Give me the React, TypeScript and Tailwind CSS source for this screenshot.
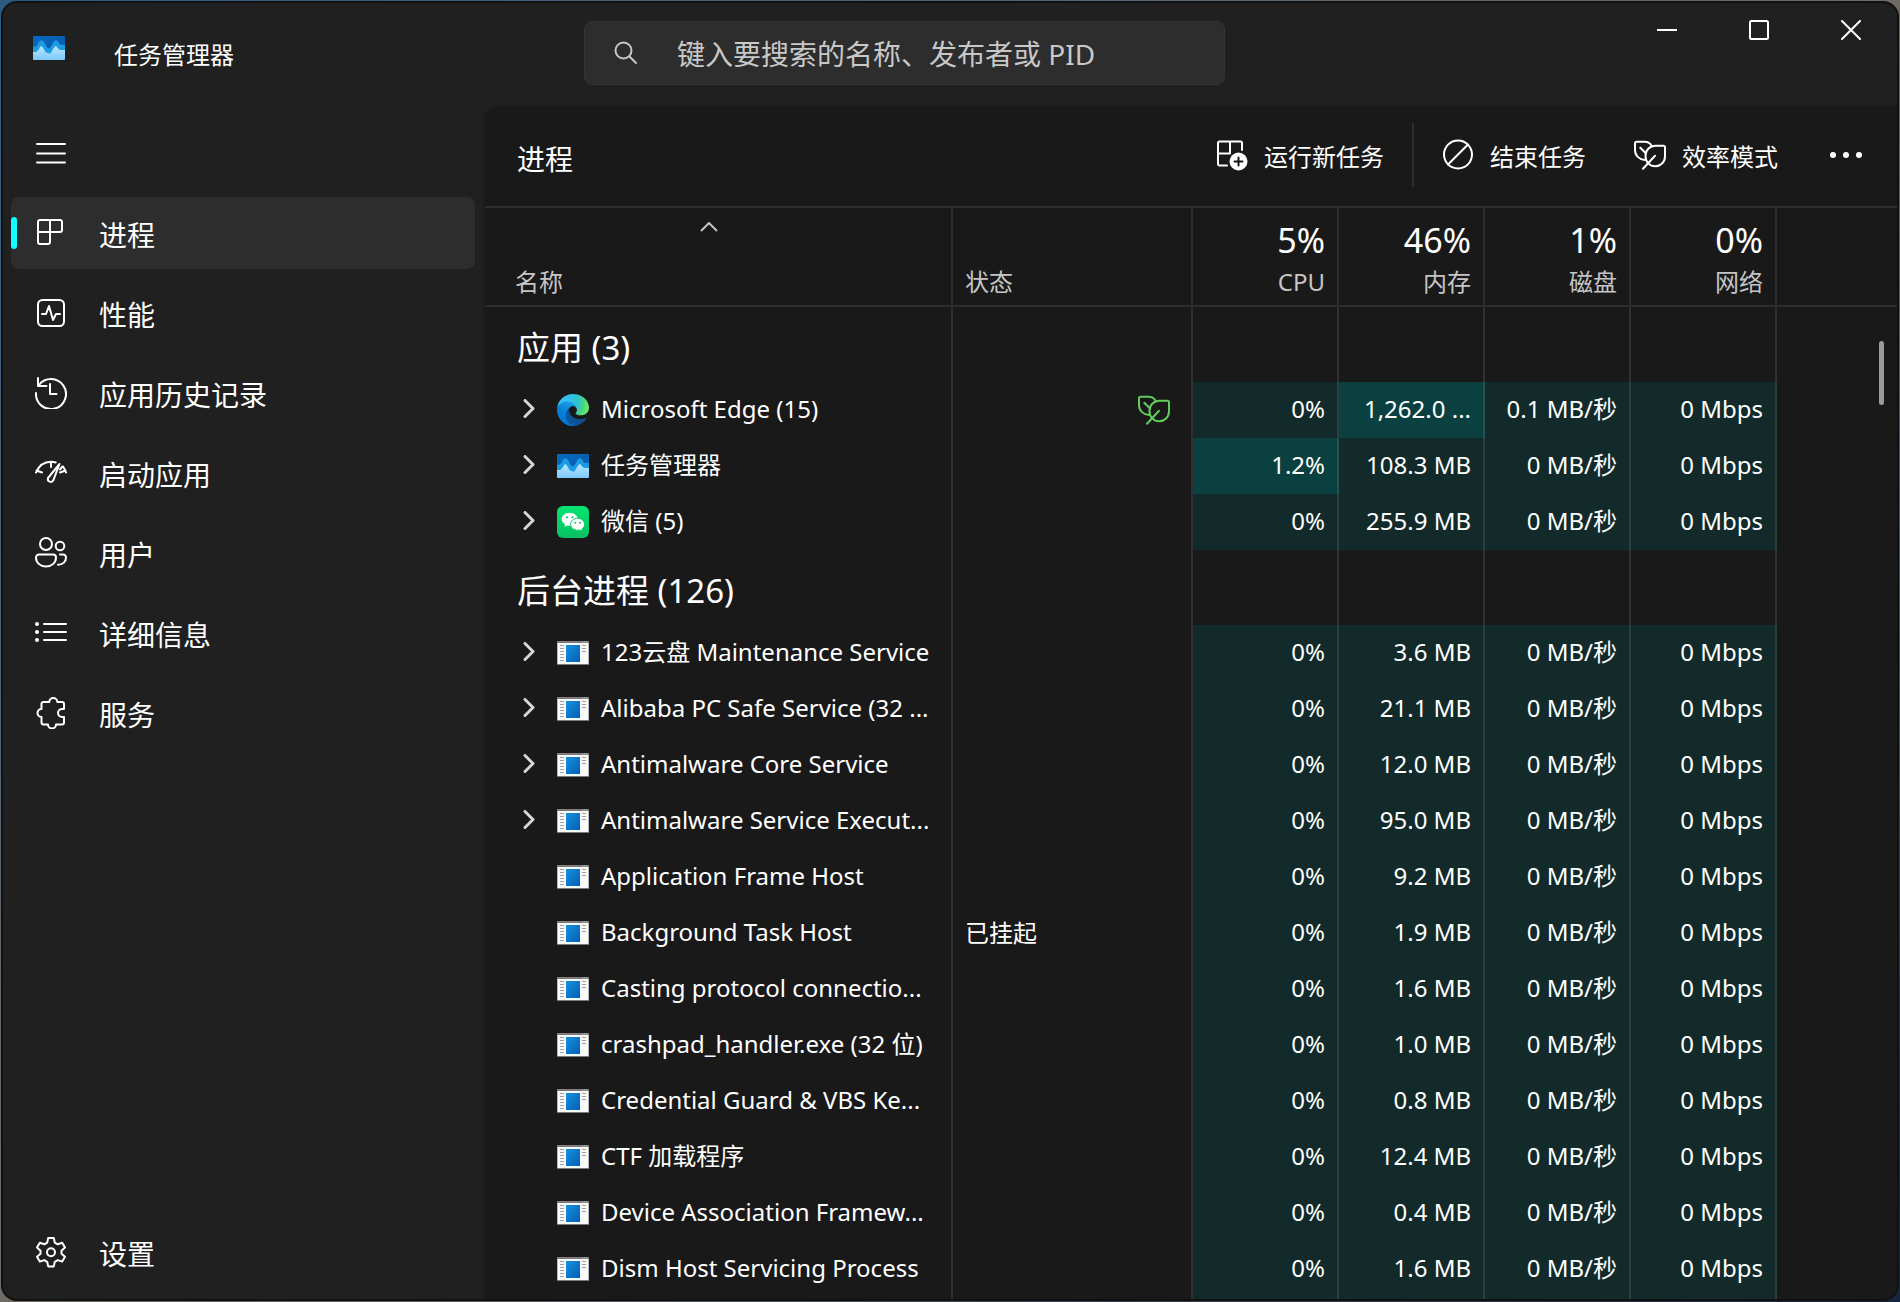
import React, { useState } from 'react';

type IconProps = { className?: string };

type NavItem = {
  id: string;
  label: string;
  icon: (props: IconProps) => React.ReactElement;
};

type Process = {
  name: string;
  icon: (props: IconProps) => React.ReactElement;
  expandable?: boolean;
  efficient?: boolean;
  status?: string;
  cpu: string;
  memory: string;
  disk: string;
  network: string;
  hot?: 'cpu' | 'memory';
};

type Group = {
  title: string;
  items: Process[];
};

/* ---------- Line icons ---------- */

function Line({ className = 'size-8', children }: { className?: string; children: React.ReactNode }) {
  return (
    <svg
      viewBox="0 0 32 32"
      className={`shrink-0 ${className}`}
      fill="none"
      stroke="currentColor"
      strokeWidth="2"
      strokeLinecap="round"
      strokeLinejoin="round"
      aria-hidden="true"
    >
      {children}
    </svg>
  );
}

const MenuIcon = () => (
  <Line>
    <path d="M2 7h28M2 16.500h28M2 25.500h28" />
  </Line>
);

const ProcessesIcon = () => (
  <Line>
    <path d="M5 3h20a2 2 0 0 1 2 2v8a2 2 0 0 1-2 2H3V5a2 2 0 0 1 2-2zM15 3v22a2 2 0 0 1-2 2H5a2 2 0 0 1-2-2V15" />
  </Line>
);

const PerformanceIcon = () => (
  <Line>
    <rect x="3" y="3" width="26" height="26" rx="4.500" />
    <path d="M7 17h4l3-8 4 14 3-6h4" />
  </Line>
);

const HistoryIcon = () => (
  <Line>
    <path d="M1 16A15 15 0 1 0 4 8M3 1v8h8.500M15 7v10h6.500" />
  </Line>
);

const StartupIcon = () => (
  <Line>
    <path d="M1 15.500C4 8.500 9.500 4.800 16 4.800c1.800 0 3.200.2 4.700.7M28 9.500c1.200 1.700 2.200 3.700 3 6M1.500 13.500l5.500 2M16 5v5M30.500 13.500l-5.500 2M27.500 9.500l-2.500 3" />
    <path d="M24.500 7L18.300 23.300a2.900 2.900 0 0 1-5.300-2.300z" />
  </Line>
);

const UsersIcon = () => (
  <Line>
    <circle cx="11" cy="7" r="6" />
    <circle cx="25" cy="9" r="4.300" />
    <path d="M4 17.500h14a3 3 0 0 1 3 3c0 5-4 9-10 9s-10-4-10-9a3 3 0 0 1 3-3zM25 17.500h3a3 3 0 0 1 3 3c0 4-3 7.300-8 7.300" />
  </Line>
);

const DetailsIcon = () => (
  <Line>
    <path d="M9 7h22M9 15h22M9 23h22" />
    <g fill="currentColor" stroke="none">
      <circle cx="2" cy="7" r="2" />
      <circle cx="2" cy="15" r="2" />
      <circle cx="2" cy="23" r="2" />
    </g>
  </Line>
);

const ServicesIcon = () => (
  <Line>
    <path d="M8.500 5h5.800a4 4 0 0 1 8 0H27a2 2 0 0 1 2 2v5h-2a4 4 0 0 0 0 8h2v5.500a2 2 0 0 1-2 2h-6a4 4 0 0 1-8 0H8.500a2 2 0 0 1-2-2V20a4 4 0 0 1 0-8V7a2 2 0 0 1 2-2z" />
  </Line>
);

const SettingsIcon = () => (
  <Line>
    <path d="M13.200 2h5.600l1 4.600 2.900 1.700 4.500-1.500 2.800 4.800-3.500 3.100v3l3.500 3.100-2.800 4.800-4.500-1.500-2.900 1.700-1 4.600h-5.600l-1-4.600-2.900-1.700-4.500 1.500L2 20.800l3.500-3.100v-3L2 11.600l2.800-4.800 4.500 1.500 2.900-1.700z" />
    <circle cx="16" cy="16.200" r="4" />
  </Line>
);

const RunTaskIcon = () => (
  <Line>
    <path d="M26 11V4a1.500 1.500 0 0 0-1.500-1.500h-21A1.500 1.500 0 0 0 2 4v21a1.500 1.500 0 0 0 1.500 1.500H11M14 2.500v12M2 14.500h12" />
    <circle cx="22.500" cy="22.500" r="9" fill="currentColor" stroke="none" />
    <path d="M22.500 18.500v8M18.500 22.500h8" stroke="#191919" />
  </Line>
);

const EndTaskIcon = () => (
  <Line>
    <circle cx="16" cy="15.500" r="14" />
    <path d="M26 5.500L6 25.500" />
  </Line>
);

const LeafIcon = ({ className }: IconProps) => (
  <Line className={className}>
    <path d="M17.500 6.500C16 4 13.500 2.700 10.500 2.700H2.500A1.500 1.500 0 0 0 1 4.200V11c0 5.500 4 9.500 10 10M6.300 8.700l5 5" />
    <path d="M21.500 6.700h8a1.500 1.500 0 0 1 1.500 1.500v9c0 6-4.500 10-9.800 10s-9.700-4.200-9.700-10.300S16 6.700 21.500 6.700zM9 29.700l12-13" />
  </Line>
);

const MoreIcon = () => (
  <Line>
    <g fill="currentColor" stroke="none">
      <circle cx="3" cy="16" r="3" />
      <circle cx="16" cy="16" r="3" />
      <circle cx="29" cy="16" r="3" />
    </g>
  </Line>
);

/* ---------- Application icons ---------- */

const TaskManagerLogo = () => (
  <svg viewBox="0 0 32 24" className="h-6 w-8 shrink-0" aria-hidden="true">
    <defs>
      <linearGradient id="tm-back" x1="0" y1="0" x2="1" y2="1">
        <stop offset="0" stopColor="#0669bf" />
        <stop offset="1" stopColor="#0a55a4" />
      </linearGradient>
      <linearGradient id="tm-front" x1="0" y1="0" x2="0" y2="1">
        <stop offset="0" stopColor="#b9e6ff" />
        <stop offset="1" stopColor="#7cc9fb" />
      </linearGradient>
    </defs>
    <rect width="32" height="24" rx="1" fill="url(#tm-back)" />
    <path d="M0 10.500h2.500c2 0 2.600-6 5.700-6.300 3.200 0 3.800 4.800 6 7.300 1 1.200 2 1.200 3 0 2.200-2.500 2.800-7.300 5.800-7.300 2.800 0 3 4.600 5 4.600h4V23H0z" fill="#1c9be3" />
    <path d="M0 16h2.500C5 16 6.500 11 8.300 10c2 1 3.200 5.500 5.200 6.700 1.300.2 2.500.3 3.500 1.300 1.600-1.600 3.500-7 5.800-8 1.800 1 2.700 4 5 4H32v9a1 1 0 0 1-1 1H1a1 1 0 0 1-1-1z" fill="url(#tm-front)" />
  </svg>
);

const EdgeLogo = () => (
  <svg viewBox="0 0 256 256" className="size-8 shrink-0" aria-hidden="true">
    <defs>
      <linearGradient id="edge-a" x1="63" y1="178" x2="241" y2="178" gradientUnits="userSpaceOnUse">
        <stop offset="0" stopColor="#0c59a4" />
        <stop offset="1" stopColor="#114a8b" />
      </linearGradient>
      <linearGradient id="edge-b" x1="158" y1="95" x2="46" y2="218" gradientUnits="userSpaceOnUse">
        <stop offset="0" stopColor="#1b9de2" />
        <stop offset="0.300" stopColor="#1595df" />
        <stop offset="0.700" stopColor="#0680d7" />
        <stop offset="1" stopColor="#0078d4" />
      </linearGradient>
      <radialGradient id="edge-c" cx="30" cy="55" r="230" gradientUnits="userSpaceOnUse">
        <stop offset="0" stopColor="#35c1f1" />
        <stop offset="0.300" stopColor="#34c1ed" />
        <stop offset="0.600" stopColor="#2bc3d2" />
        <stop offset="0.850" stopColor="#4fd67f" />
        <stop offset="1" stopColor="#66eb6e" />
      </radialGradient>
    </defs>
    <g transform="translate(-4.630 -4.920)">
      <path fill="url(#edge-a)" d="M235.68 195.46a93.73 93.73 0 01-10.54 4.71 101.87 101.87 0 01-35.9 6.46c-47.32 0-88.54-32.55-88.54-74.32A31.48 31.48 0 01117.13 105c-42.8 1.8-53.8 46.4-53.8 72.53 0 73.88 68.09 81.37 82.76 81.37 7.91 0 19.84-2.3 27-4.56l1.31-.44a128.34 128.34 0 0066.6-52.8 4 4 0 00-5.32-5.64z" />
      <path fill="url(#edge-b)" d="M110.34 246.34A79.2 79.2 0 0187.6 225a80.72 80.72 0 0129.53-120c3.12-1.47 8.45-4.13 15.54-4a32.35 32.35 0 0125.69 13 31.88 31.88 0 016.36 18.66c0-.21 24.46-79.6-80-79.6-43.9 0-80 41.66-80 78.21a130.15 130.15 0 0012.11 56 128 128 0 00156.38 67.11 75.55 75.55 0 01-62.78-8z" />
      <path fill="url(#edge-c)" d="M156.94 153.78c-.81 1.05-3.3 2.5-3.3 5.66 0 2.61 1.7 5.12 4.72 7.23 14.38 10 41.49 8.68 41.56 8.68a59.56 59.56 0 0030.27-8.35 61.38 61.38 0 0030.43-52.88c.26-22.41-8-37.31-11.34-43.91C228.09 28.76 182.35 4.92 132.61 4.92a128 128 0 00-128 126.2c.48-36.54 36.8-66.05 80-66.05 3.5 0 23.46.34 42 10.07 16.34 8.58 24.9 18.94 30.85 29.21 6.18 10.67 7.28 24.15 7.28 29.52s-2.74 13.33-7.8 19.91z" />
    </g>
  </svg>
);

const WeChatLogo = () => (
  <svg viewBox="0 0 32 32" className="size-8 shrink-0" aria-hidden="true">
    <defs>
      <linearGradient id="wechat-bg" x1="0" y1="0" x2="0" y2="1">
        <stop offset="0" stopColor="#05e573" />
        <stop offset="1" stopColor="#09c063" />
      </linearGradient>
    </defs>
    <rect width="32" height="32" rx="6" fill="url(#wechat-bg)" />
    <path fill="#fff" d="M12.700 6.800c4.400 0 8 2.900 8 6.500s-3.600 6.500-8 6.500c-.9 0-1.800-.1-2.600-.4l-2.700 1.400.6-2.500c-2-1.200-3.300-3-3.300-5 0-3.600 3.600-6.500 8-6.500z" />
    <path fill="#fff" stroke="#07d068" strokeWidth="1" d="M20.600 12.300c3.900 0 7 2.700 7 6 0 1.900-1 3.500-2.600 4.600l.5 2.300-2.400-1.200c-.8.2-1.600.3-2.500.3-3.900 0-7-2.700-7-6s3.100-6 7-6z" />
    <g fill="#09c964">
      <circle cx="10" cy="11.300" r="1.100" />
      <circle cx="15.500" cy="11.300" r="1.100" />
      <circle cx="18.300" cy="16.700" r="1" />
      <circle cx="23" cy="16.700" r="1" />
    </g>
  </svg>
);

const ServiceLogo = () => (
  <svg viewBox="0 0 32 24" className="h-6 w-8 shrink-0" aria-hidden="true">
    <defs>
      <linearGradient id="svc-blue" x1="0" y1="0" x2="1" y2="1">
        <stop offset="0" stopColor="#1490df" />
        <stop offset="1" stopColor="#0560b6" />
      </linearGradient>
    </defs>
    <rect width="32" height="24" fill="#7b7b7b" />
    <rect x="0.500" y="2" width="31" height="21" fill="#fafafa" />
    <path d="M25 1h1M27 1h1M29 1h1" stroke="#d0d0d0" />
    <rect x="9" y="4" width="14" height="17" fill="url(#svc-blue)" />
    <path d="M3 4.500h4M3 7.500h4M3 10.500h4M3 13.500h4M3 16.500h4M3 19.500h4M25 4.500h4M25 7.500h4M25 10.500h4" stroke="#a0a0a0" />
  </svg>
);

/* ---------- Data ---------- */

const navItems: NavItem[] = [
  { id: 'processes', label: '进程', icon: ProcessesIcon },
  { id: 'performance', label: '性能', icon: PerformanceIcon },
  { id: 'history', label: '应用历史记录', icon: HistoryIcon },
  { id: 'startup', label: '启动应用', icon: StartupIcon },
  { id: 'users', label: '用户', icon: UsersIcon },
  { id: 'details', label: '详细信息', icon: DetailsIcon },
  { id: 'services', label: '服务', icon: ServicesIcon },
];

const totals = [
  { id: 'cpu', value: '5%', label: 'CPU' },
  { id: 'memory', value: '46%', label: '内存' },
  { id: 'disk', value: '1%', label: '磁盘' },
  { id: 'network', value: '0%', label: '网络' },
];

const idle = { icon: ServiceLogo, cpu: '0%', disk: '0 MB/秒', network: '0 Mbps' };

const groups: Group[] = [
  {
    title: '应用 (3)',
    items: [
      { name: 'Microsoft Edge (15)', icon: EdgeLogo, expandable: true, efficient: true, cpu: '0%', memory: '1,262.0 ...', disk: '0.1 MB/秒', network: '0 Mbps', hot: 'memory' },
      { name: '任务管理器', icon: TaskManagerLogo, expandable: true, cpu: '1.2%', memory: '108.3 MB', disk: '0 MB/秒', network: '0 Mbps', hot: 'cpu' },
      { name: '微信 (5)', icon: WeChatLogo, expandable: true, cpu: '0%', memory: '255.9 MB', disk: '0 MB/秒', network: '0 Mbps' },
    ],
  },
  {
    title: '后台进程 (126)',
    items: [
      { ...idle, name: '123云盘 Maintenance Service', expandable: true, memory: '3.6 MB' },
      { ...idle, name: 'Alibaba PC Safe Service (32 ...', expandable: true, memory: '21.1 MB' },
      { ...idle, name: 'Antimalware Core Service', expandable: true, memory: '12.0 MB' },
      { ...idle, name: 'Antimalware Service Execut...', expandable: true, memory: '95.0 MB' },
      { ...idle, name: 'Application Frame Host', memory: '9.2 MB' },
      { ...idle, name: 'Background Task Host', status: '已挂起', memory: '1.9 MB' },
      { ...idle, name: 'Casting protocol connectio...', memory: '1.6 MB' },
      { ...idle, name: 'crashpad_handler.exe (32 位)', memory: '1.0 MB' },
      { ...idle, name: 'Credential Guard & VBS Ke...', memory: '0.8 MB' },
      { ...idle, name: 'CTF 加载程序', memory: '12.4 MB' },
      { ...idle, name: 'Device Association Framew...', memory: '0.4 MB' },
      { ...idle, name: 'Dism Host Servicing Process', memory: '1.6 MB' },
    ],
  },
];

/* ---------- Layout ---------- */

function TitleBar() {
  return (
    <header className="flex h-[102px] shrink-0 items-start">
      <div className="flex w-[480px] shrink-0 items-start pl-[30px]">
        <div className="pt-[33px]">
          <TaskManagerLogo />
        </div>
        <h1 className="pt-8 pl-[49px] text-2xl leading-10">任务管理器</h1>
      </div>
      <div className="flex min-w-0 flex-1 justify-start pt-[18px] pl-[101px]">
        <label className="flex h-16 w-full max-w-[641px] items-center rounded-lg border border-[#333333] bg-[#2d2d2d] pl-[29px]">
          <svg viewBox="0 0 24 24" className="size-6 shrink-0 text-[#c8c8c8]" fill="none" stroke="currentColor" strokeWidth="2" strokeLinecap="round" aria-hidden="true">
            <circle cx="9.500" cy="9.500" r="8" />
            <path d="M15.500 15.500L22 22" />
          </svg>
          <input
            type="text"
            aria-label="搜索"
            placeholder="键入要搜索的名称、发布者或 PID"
            className="ml-[39px] h-full min-w-0 flex-1 bg-transparent pt-0.5 text-[28px] text-white outline-none placeholder:text-[#c8c8c8]"
          />
        </label>
      </div>
      <div className="flex shrink-0">
        <button aria-label="最小化" className="flex h-[54px] w-[92px] items-center justify-center">
          <svg viewBox="0 0 20 20" className="size-5" stroke="currentColor" strokeWidth="2" aria-hidden="true">
            <path d="M0 10h20" />
          </svg>
        </button>
        <button aria-label="最大化" className="flex h-[54px] w-[92px] items-center justify-center">
          <svg viewBox="0 0 20 20" className="size-5" fill="none" stroke="currentColor" strokeWidth="2" aria-hidden="true">
            <rect x="1" y="1" width="18" height="18" rx="1.500" />
          </svg>
        </button>
        <button aria-label="关闭" className="flex h-[54px] w-[92px] items-center justify-center">
          <svg viewBox="0 0 20 20" className="size-5" stroke="currentColor" strokeWidth="2" strokeLinecap="round" aria-hidden="true">
            <path d="M1 1l18 18M19 1L1 19" />
          </svg>
        </button>
      </div>
    </header>
  );
}

function NavButton({ item, active, onClick }: { item: NavItem; active: boolean; onClick: () => void }) {
  const Icon = item.icon;
  return (
    <button
      onClick={onClick}
      aria-current={active ? 'page' : undefined}
      className={`flex h-[72px] w-full items-center rounded-lg text-left ${active ? 'bg-[#2d2d2d]' : ''}`}
    >
      <span className={`h-8 w-[6px] rounded-full ${active ? 'bg-[#12ffff]' : ''}`} />
      <span className="ml-[18px]">
        <Icon />
      </span>
      <span className="ml-8 pt-1 text-[28px] leading-10">{item.label}</span>
    </button>
  );
}

function ProcessRow({ process }: { process: Process }) {
  const Icon = process.icon;
  const cell = 'h-14 border-r-2 border-white/10 pr-3 pb-0.5 text-right text-2xl';
  return (
    <tr>
      <td className="h-14 border-r-2 border-white/10 p-0">
        <div className="flex items-center">
          <div className="flex w-[72px] shrink-0 items-center pb-0.5 pl-[37px]">
            {process.expandable && (
              <button aria-label={`展开 ${process.name}`} className="text-[#d6d6d6]">
                <svg viewBox="0 0 14 20" className="h-5 w-[14px]" fill="none" stroke="currentColor" strokeWidth="3" strokeLinecap="round" strokeLinejoin="round" aria-hidden="true">
                  <path d="M3 1.500L11 9.500L3 17.500" />
                </svg>
              </button>
            )}
          </div>
          <Icon />
          <span className="ml-3 pb-0.5 text-2xl leading-8">{process.name}</span>
        </div>
      </td>
      <td className="h-14 border-r-2 border-white/10 py-0 pr-[21px] pl-3">
        <div className="flex items-center justify-between text-2xl leading-8">
          <span>{process.status}</span>
          {process.efficient && <LeafIcon className="size-8 text-[#62cb5c]" />}
        </div>
      </td>
      <td className={`${cell} ${process.hot === 'cpu' ? 'bg-[#0a4140]' : 'bg-[#122b2a]'}`}>{process.cpu}</td>
      <td className={`${cell} ${process.hot === 'memory' ? 'bg-[#0a4140]' : 'bg-[#122b2a]'}`}>{process.memory}</td>
      <td className={`${cell} bg-[#122b2a]`}>{process.disk}</td>
      <td className={`${cell} bg-[#122b2a]`}>{process.network}</td>
      <td />
    </tr>
  );
}

function ProcessTable() {
  return (
    <div className="relative min-h-0 flex-1 overflow-hidden">
      <table className="w-full table-fixed border-separate border-spacing-0 whitespace-nowrap">
        <colgroup>
          <col className="w-[468px]" />
          <col className="w-[240px]" />
          <col className="w-[146px]" />
          <col className="w-[146px]" />
          <col className="w-[146px]" />
          <col className="w-[146px]" />
          <col />
        </colgroup>
        <thead className="font-normal text-[#c5c5c5]">
          <tr>
            <th className="h-[99px] border-r-2 border-b-2 border-[#2d2d2d] p-0 text-left align-bottom font-normal">
              <div className="flex justify-center pr-[18px] pb-8">
                <svg viewBox="0 0 18 10" className="h-[10px] w-[18px]" fill="none" stroke="currentColor" strokeWidth="2" aria-hidden="true">
                  <path d="M1 9L9 1L17 9" />
                </svg>
              </div>
              <div className="pb-[5px] pl-[30px] text-2xl leading-9">名称</div>
            </th>
            <th className="h-[99px] border-r-2 border-b-2 border-[#2d2d2d] px-3 pt-0 pb-[5px] text-left align-bottom text-2xl leading-9 font-normal">
              状态
            </th>
            {totals.map((total) => (
              <th key={total.id} className="h-[99px] border-r-2 border-b-2 border-[#2d2d2d] pt-0 pr-3 pb-[5px] pl-0 text-right align-bottom font-normal">
                <div className="text-[34px] leading-[48px] text-white">{total.value}</div>
                <div className="text-2xl leading-9">{total.label}</div>
              </th>
            ))}
            <th className="border-b-2 border-[#2d2d2d]" />
          </tr>
        </thead>
        {groups.map((group) => (
          <tbody key={group.title}>
            <tr>
              <th className="h-[75px] border-r-2 border-white/10 pt-1.5 pb-0 pl-8 text-left text-[33px] leading-10 font-normal">
                {group.title}
              </th>
              <td className="border-r-2 border-white/10" />
              {totals.map((total) => (
                <td key={total.id} className="border-r-2 border-white/10" />
              ))}
              <td />
            </tr>
            {group.items.map((process) => (
              <ProcessRow key={process.name} process={process} />
            ))}
          </tbody>
        ))}
        <tbody>
          <tr>
            <td className="h-14 border-r-2 border-white/10" />
            <td className="border-r-2 border-white/10" />
            {totals.map((total) => (
              <td key={total.id} className="border-r-2 border-white/10 bg-[#122b2a]" />
            ))}
            <td />
          </tr>
        </tbody>
      </table>
      {/* Scroll thumb */}
      <div className="absolute top-[133px] right-[13px] h-16 w-[5px] rounded-full bg-[#9a9a9a]" />
    </div>
  );
}

export default function App() {
  const [activeTab, setActiveTab] = useState('processes');

  return (
    <div className="h-screen overflow-hidden bg-linear-to-br from-[#2b5a80] via-[#6f6a64] to-[#14263f] p-px font-['Noto_Sans','Noto_Sans_CJK_SC',sans-serif] text-white">
      <div className="flex h-full flex-col overflow-hidden rounded-2xl border-2 border-[#111111] bg-[#202020]">
        <TitleBar />
        <div className="flex min-h-0 flex-1">
          <nav className="flex w-[480px] shrink-0 flex-col pr-2 pb-[11px] pl-2">
            <button aria-label="打开导航" className="flex h-[92px] w-full items-center pt-1 pl-6">
              <MenuIcon />
            </button>
            <div className="flex flex-1 flex-col gap-2">
              {navItems.map((item) => (
                <NavButton key={item.id} item={item} active={activeTab === item.id} onClick={() => setActiveTab(item.id)} />
              ))}
            </div>
            <NavButton
              item={{ id: 'settings', label: '设置', icon: SettingsIcon }}
              active={activeTab === 'settings'}
              onClick={() => setActiveTab('settings')}
            />
          </nav>

          <main className="flex min-w-0 flex-1 flex-col rounded-tl-2xl border-t-2 border-l-2 border-[#1c1c1c] bg-[#191919]">
            <div className="flex h-[101px] shrink-0 items-center border-b-2 border-[#2d2d2d] pr-[7px] pb-1 pl-8">
              <h2 className="flex-1 pt-2 text-[28px] leading-10">进程</h2>
              <button className="flex items-center gap-4 px-6 text-2xl leading-8">
                <RunTaskIcon />
                <span className="pt-1">运行新任务</span>
              </button>
              <div className="mx-1 h-16 w-[2px] bg-[#2d2d2d]" />
              <button className="flex items-center gap-4 px-6 text-2xl leading-8">
                <EndTaskIcon />
                <span className="pt-1">结束任务</span>
              </button>
              <button className="flex items-center gap-4 px-6 text-2xl leading-8">
                <LeafIcon />
                <span className="pt-1">效率模式</span>
              </button>
              <button aria-label="更多选项" className="flex h-16 w-[88px] items-center justify-center">
                <MoreIcon />
              </button>
            </div>
            <ProcessTable />
          </main>
        </div>
      </div>
    </div>
  );
}
